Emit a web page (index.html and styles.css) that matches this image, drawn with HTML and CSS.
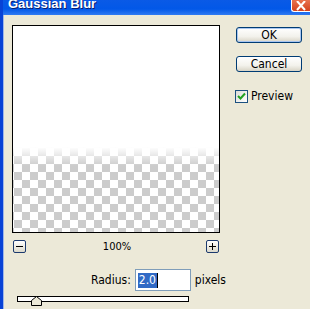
FILE: index.html
```html
<!DOCTYPE html>
<html lang="en">
    <head>
        <meta charset="UTF-8" />
        <title>Gaussian Blur</title>
        <link rel="stylesheet" href="styles.css">
    </head>
    <body>
        <div class="window">
            <div class="titlebar">
                <span class="title">Gaussian Blur</span>
                <span class="close">
                    <svg width="12" height="10" viewBox="0 0 12 10"><path d="M2 0 L10 9 M10 0 L2 9" stroke="#fff" stroke-width="2" fill="none"/></svg>
                </span>
            </div>
            <div class="content">
                <div class="main">
                    <div class="preview"></div>
                    <div class="zoom-row">
                        <span class="zoom-btn">
                            <svg width="7" height="7" viewBox="0 0 7 7"><path d="M0 3.5 H7" stroke="#000" stroke-width="1"/></svg>
                        </span>
                        <span class="zoom-level">100%</span>
                        <span class="zoom-btn">
                            <svg width="7" height="7" viewBox="0 0 7 7"><path d="M0 3.5 H7 M3.5 0 V7" stroke="#000" stroke-width="1"/></svg>
                        </span>
                    </div>
                    <div class="radius-row">
                        <label class="radius-label">Radius:</label>
                        <div class="radius-input"><span class="sel">2.0</span><span class="caret"></span></div>
                        <span class="unit">pixels</span>
                    </div>
                    <div class="slider">
                        <div class="track"></div>
                        <svg class="thumb" width="11" height="10" viewBox="0 0 11 10"><path d="M0.5 9.5 V4.5 L5.5 0.5 L10.5 4.5 V9.5 Z" fill="#ece9d8" stroke="#000"/></svg>
                    </div>
                </div>
                <div class="side">
                    <button class="btn default">OK</button>
                    <button class="btn">Cancel</button>
                    <label class="check">
                        <span class="box">
                            <svg width="9" height="9" viewBox="0 0 9 9"><path d="M1 4 L3.5 6.5 L8 1.5" stroke="#21a121" stroke-width="2" fill="none"/></svg>
                        </span>
                        Preview
                    </label>
                </div>
            </div>
        </div>
    </body>
</html>
```

FILE: styles.css
```css
* {
    margin: 0;
    padding: 0;
    box-sizing: border-box;
}

html,
body {
    width: 310px;
    height: 309px;
    overflow: hidden;
}

body {
    font-family: Tahoma, "DejaVu Sans Condensed", "Liberation Sans", sans-serif;
    font-size: 11px;
    color: #000;
}

.window {
    display: flex;
    flex-direction: column;
    height: 309px;
    background: #ece9d8;
    border-left: 3px solid #0842d6;
}

/* title bar, top is cut off in the shot */
.titlebar {
    display: flex;
    height: 15px;
    background: linear-gradient(#0a5ae6, #0258e8 60%, #2f7af2);
    box-shadow: -1px 0 0 #0842d6;
}

.title {
    margin: -4px 0 0 5px;
    font-family: "Liberation Sans", sans-serif;
    font-weight: bold;
    font-size: 13px;
    line-height: 16px;
    color: #fff;
    text-shadow: 1px 1px 0 #0a1e6e;
}

.close {
    display: flex;
    align-items: center;
    justify-content: center;
    width: 19px;
    height: 12px;
    margin-left: auto;
    background: linear-gradient(#e8724f, #d4431e);
    border: 1px solid #fff;
    border-top: 0;
    border-right: 0;
    border-radius: 0 0 0 3px;
}

.content {
    display: flex;
    flex: 1;
    padding: 10px 0 0 8px;
    border-left: 1px solid #9fb6e8;
}

.main {
    display: flex;
    flex-direction: column;
    width: 208px;
}

.preview {
    width: 208px;
    height: 208px;
    border: 1px solid #000;
    background:
        linear-gradient(#fff 0, #fff 121px, rgba(255, 255, 255, 0) 140px),
        conic-gradient(#ccc 25%, #fff 0 50%, #ccc 0 75%, #fff 0);
    background-size: auto, 16px 16px;
    background-position: 0 0, 1px 10px;
}

.zoom-row {
    display: flex;
    align-items: center;
    justify-content: space-between;
    margin-top: 6px;
    padding: 0 1px;
    height: 14px;
}

.zoom-btn {
    display: flex;
    align-items: center;
    justify-content: center;
    width: 13px;
    height: 13px;
    border: 1px solid #1c3a6e;
    border-radius: 2px;
    background: linear-gradient(#fff, #dcd9cb);
}

.zoom-level {
    margin-left: 2px;
}

.radius-row {
    display: flex;
    align-items: center;
    gap: 4px;
    margin-top: 16px;
    padding-left: 79px;
    height: 22px;
    font-size: 12px;
}

.radius-label {
    white-space: nowrap;
}

.radius-input {
    display: flex;
    align-items: center;
    flex: none;
    width: 56px;
    height: 22px;
    padding-left: 2px;
    background: #fff;
    border: 1px solid #7f9db9;
}

.sel {
    background: #316ac5;
    color: #fff;
    line-height: 15px;
    padding: 0 1px;
}

.caret {
    width: 1px;
    height: 15px;
    background: #000;
}

.unit {
    white-space: nowrap;
}

.slider {
    position: relative;
    margin: 5px 0 0 5px;
    width: 172px;
}

.track {
    height: 6px;
    border: 1px solid #000;
    background: #fff;
}

.thumb {
    position: absolute;
    left: 14px;
    top: 0;
}

.side {
    display: flex;
    flex-direction: column;
    margin-left: 16px;
    padding-top: 2px;
}

.btn {
    width: 66px;
    height: 16px;
    margin-bottom: 13px;
    font-family: inherit;
    font-size: 12px;
    line-height: 14px;
    color: #000;
    border: 1px solid #003c74;
    border-radius: 3px;
    background: linear-gradient(#fff, #f3f2ec 60%, #d8d4c6);
}

.btn.default {
    box-shadow: inset 0 0 0 1px #a9c6f0;
}

.check {
    display: flex;
    align-items: center;
    gap: 3px;
    margin-top: 4px;
    margin-left: -1px;
    font-size: 12px;
}

.box {
    display: flex;
    align-items: center;
    justify-content: center;
    width: 13px;
    height: 13px;
    border: 1px solid #1c5180;
    background: linear-gradient(135deg, #dcdcd7, #fff);
}
```
